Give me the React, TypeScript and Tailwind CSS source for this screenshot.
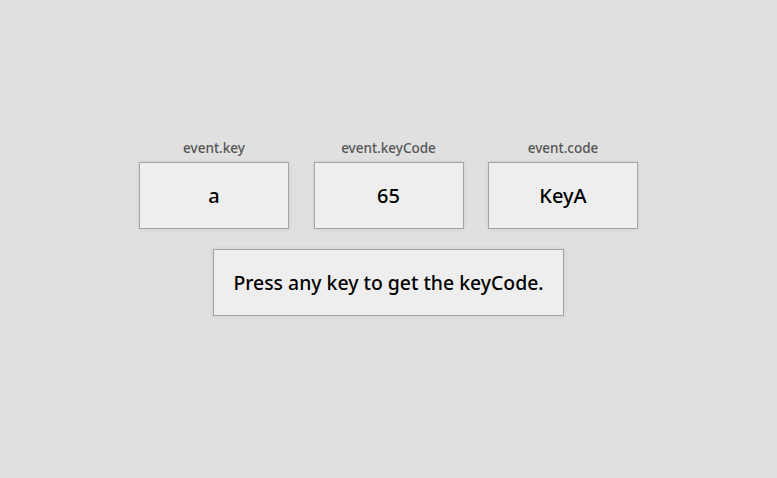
const keys = [
  { label: "event.key", value: "a" },
  { label: "event.keyCode", value: "65" },
  { label: "event.code", value: "KeyA" },
];

export default function App() {
  return (
    <div
      className="min-h-screen w-full bg-[#e0e0e0] flex flex-col items-center pt-[139px]"
      style={{ fontFamily: '"Noto Sans", "Lato", sans-serif' }}
    >
      <div className="flex gap-[24.5px]">
        {keys.map((k) => (
          <div key={k.label} className="flex flex-col items-center">
            <small className="text-[13.5px] leading-[18px] font-medium text-[#555] mb-[5px]">
              {k.label}
            </small>
            <div className="w-[150px] h-[67px] flex items-center justify-center bg-[#eeeeee] border border-[#a3a3a3] shadow-[0_0_4px_rgba(0,0,0,0.1)] text-[20px] font-medium text-black">
              {k.value}
            </div>
          </div>
        ))}
      </div>
      <div className="mt-[20px] w-[351px] h-[67px] flex items-center justify-center bg-[#eeeeee] border border-[#a3a3a3] shadow-[0_0_4px_rgba(0,0,0,0.1)] text-[19.4px] font-medium text-black">
        Press any key to get the keyCode.
      </div>
    </div>
  );
}
